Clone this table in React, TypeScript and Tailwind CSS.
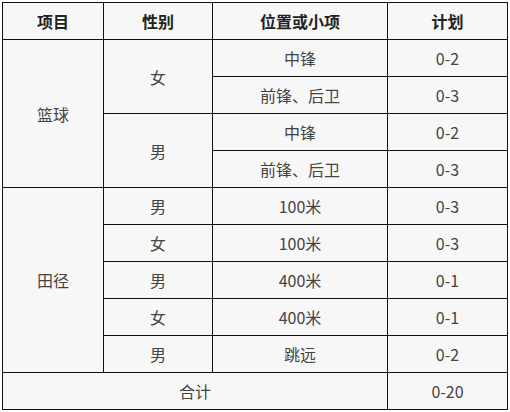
const rows: { group?: [string, number]; sex?: [string, number]; item: string; plan: string }[] = [
  { group: ['篮球', 4], sex: ['女', 2], item: '中锋', plan: '0-2' },
  { item: '前锋、后卫', plan: '0-3' },
  { sex: ['男', 2], item: '中锋', plan: '0-2' },
  { item: '前锋、后卫', plan: '0-3' },
  { group: ['田径', 5], sex: ['男', 1], item: '100米', plan: '0-3' },
  { sex: ['女', 1], item: '100米', plan: '0-3' },
  { sex: ['男', 1], item: '400米', plan: '0-1' },
  { sex: ['女', 1], item: '400米', plan: '0-1' },
  { sex: ['男', 1], item: '跳远', plan: '0-2' },
];

const cell = 'border border-[#111] text-center align-middle';

export default function App() {
  return (
    <div
      className="bg-white w-[510px] h-[412px] pt-[2px] pl-[2px]"
      style={{ fontFamily: '"Microsoft YaHei", "Noto Sans CJK SC", "Noto Sans", sans-serif' }}
    >
      <table className="w-[505px] table-fixed border-collapse bg-[#f7f7f7] text-[16px] leading-5 text-[#444]">
        <colgroup>
          <col className="w-[101px]" />
          <col className="w-[109px]" />
          <col className="w-[175px]" />
          <col className="w-[120px]" />
        </colgroup>
        <thead>
          <tr className="h-[37px]">
            <th className={`${cell} font-bold text-[#222]`}>项目</th>
            <th className={`${cell} font-bold text-[#222]`}>性别</th>
            <th className={`${cell} font-bold text-[#222]`}>位置或小项</th>
            <th className={`${cell} font-bold text-[#222]`}>计划</th>
          </tr>
        </thead>
        <tbody>
          {rows.map((r, i) => (
            <tr key={i} className="h-[37px]">
              {r.group && (
                <td rowSpan={r.group[1]} className={cell}>
                  {r.group[0]}
                </td>
              )}
              {r.sex && (
                <td rowSpan={r.sex[1]} className={cell}>
                  {r.sex[0]}
                </td>
              )}
              <td className={cell}>{r.item}</td>
              <td className={cell}>{r.plan}</td>
            </tr>
          ))}
          <tr className="h-[37px]">
            <td colSpan={3} className={cell}>
              合计
            </td>
            <td className={cell}>0-20</td>
          </tr>
        </tbody>
      </table>
    </div>
  );
}
